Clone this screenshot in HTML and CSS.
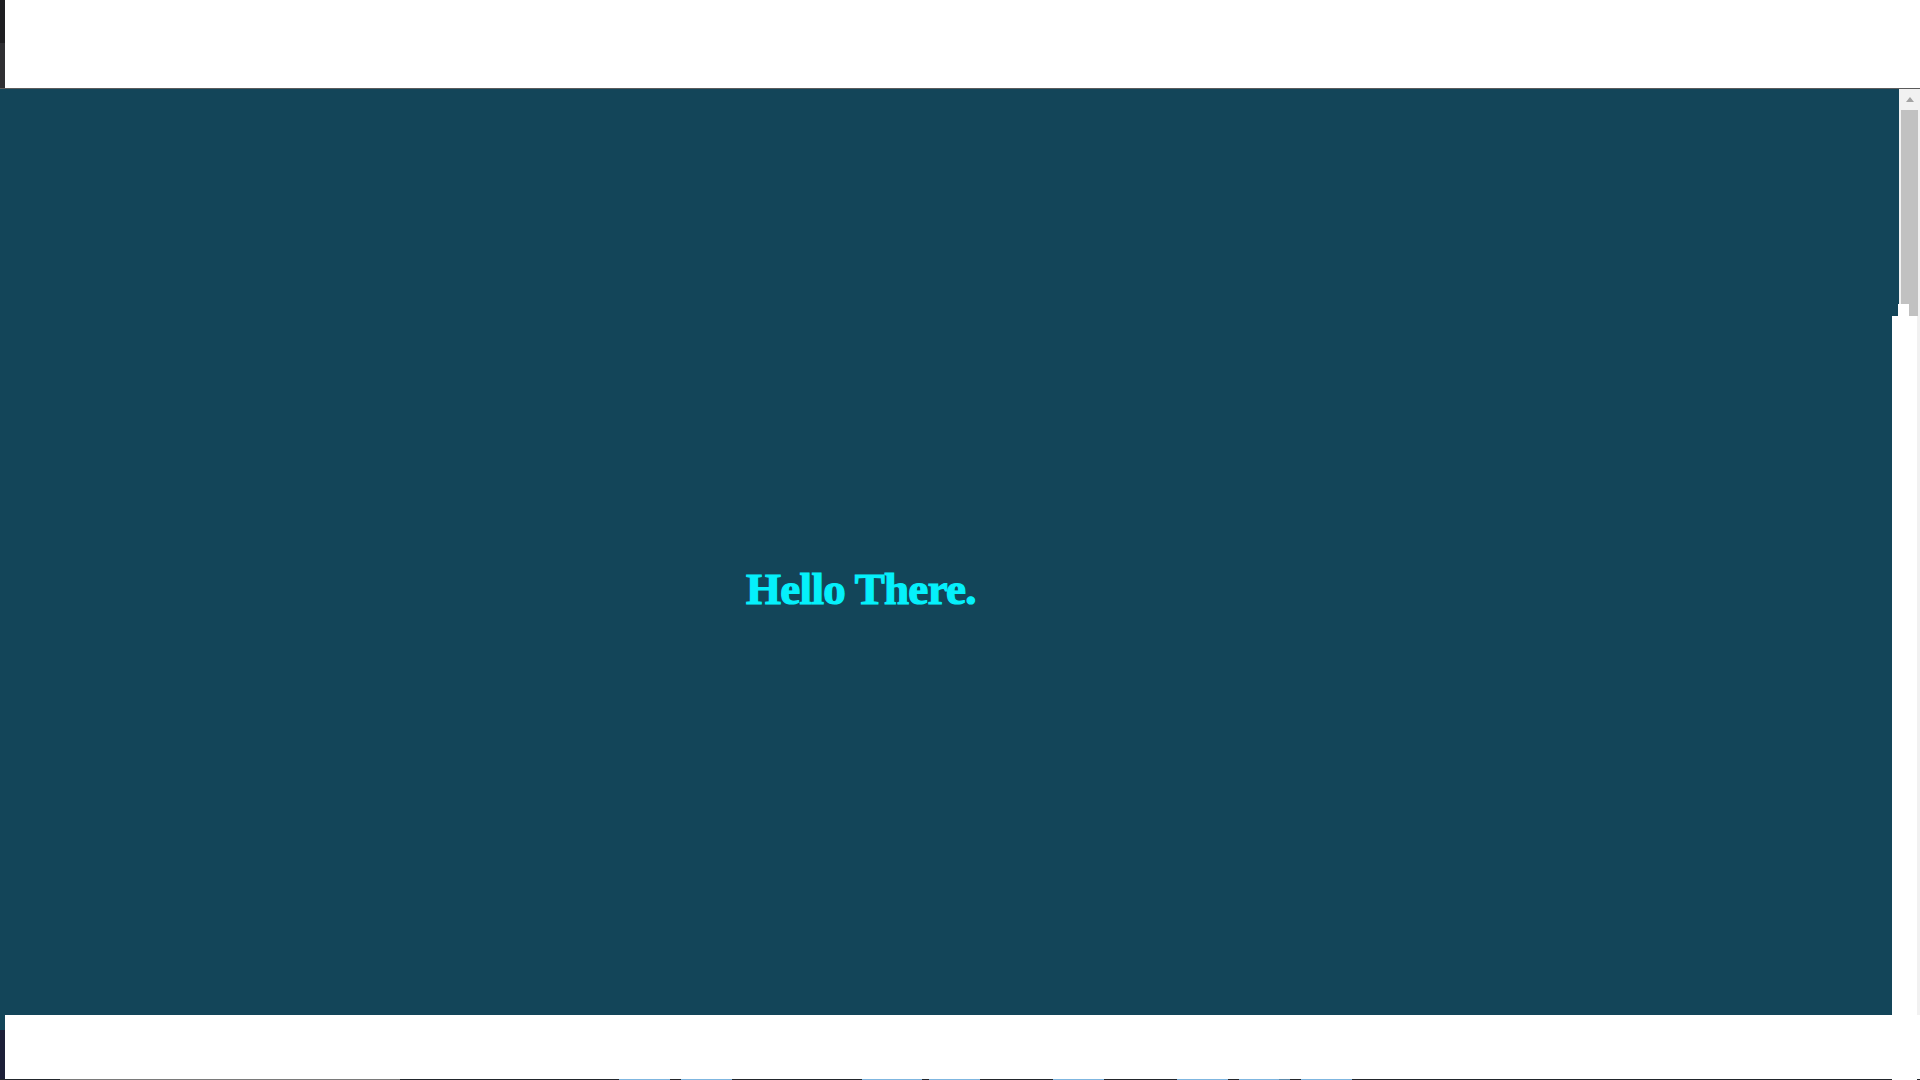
FILE: index.html
```html
<!DOCTYPE html>
<html lang="en">
<head>
<meta charset="utf-8">
<title>Hello There</title>
<link rel="stylesheet" href="styles.css">
</head>
<body>
<div class="screen">
  <div class="top">
    <div class="edge">
      <div class="edge-a"></div>
      <div class="edge-b"></div>
    </div>
    <div class="top-fill"></div>
  </div>
  <div class="rule"></div>
  <div class="main">
    <div class="stage">
      <h1 class="hello">Hello There.</h1>
    </div>
    <div class="side">
      <div class="side-top">
        <div class="teal-a"></div>
        <div class="scrollbar">
          <div class="arrow"><span class="tri"></span></div>
          <div class="thumb"></div>
        </div>
      </div>
      <div class="side-mid">
        <div class="teal-b"></div>
        <div class="notch"></div>
        <div class="thumb-end"></div>
        <div class="track-end"></div>
      </div>
      <div class="side-low">
        <div class="blank"></div>
        <div class="track-low"></div>
      </div>
    </div>
  </div>
  <div class="bottom">
    <div class="edge-bottom">
      <div class="edge-c"></div>
      <div class="edge-d"></div>
    </div>
    <div class="bottom-fill"></div>
  </div>
  <div class="taskline"></div>
</div>
</body>
</html>
```
FILE: styles.css
```css
html, body {
  margin: 0;
  padding: 0;
  background: #ffffff;
}
.screen {
  width: 1920px;
  height: 1080px;
  overflow: hidden;
  display: flex;
  flex-direction: column;
  background: #ffffff;
}
.top {
  height: 88px;
  display: flex;
}
.edge {
  width: 5px;
  display: flex;
  flex-direction: column;
}
.edge-a {
  height: 43px;
  background: #1e1e21;
}
.edge-b {
  flex: 1;
  background: #2f2f32;
}
.top-fill {
  flex: 1;
  background: #ffffff;
}
.rule {
  height: 1px;
  background: #5b5b5b;
}
.main {
  height: 926px;
  display: flex;
}
.stage {
  flex: 1;
  background: #134559;
  padding: 478px 0 0 746px;
  box-sizing: border-box;
}
.hello {
  margin: 0;
  font-family: "Liberation Serif", "DejaVu Serif", serif;
  font-weight: 700;
  font-size: 45px;
  line-height: 45px;
  letter-spacing: -0.7px;
  color: #05f0fb;
  -webkit-text-stroke: 1.2px #05f0fb;
}
.side {
  width: 28px;
  display: flex;
  flex-direction: column;
}
.side-top {
  height: 215px;
  display: flex;
}
.teal-a {
  width: 7px;
  background: #134559;
}
.scrollbar {
  flex: 1;
  background: #f1f1f1;
  display: flex;
  flex-direction: column;
}
.arrow {
  height: 21px;
  display: flex;
  justify-content: center;
  align-items: center;
}
.tri {
  width: 0;
  height: 0;
  border-left: 4.5px solid transparent;
  border-right: 4.5px solid transparent;
  border-bottom: 5px solid #a3a3a3;
  margin-left: 1px;
}
.thumb {
  flex: 1;
  margin: 0 2px 0 2px;
  background: #c1c1c1;
}
.side-mid {
  height: 12px;
  display: flex;
}
.teal-b {
  width: 6px;
  background: #134559;
}
.notch {
  width: 11px;
  background: #ffffff;
}
.thumb-end {
  width: 9px;
  background: #c1c1c1;
}
.track-end {
  flex: 1;
  background: #f1f1f1;
}
.side-low {
  flex: 1;
  display: flex;
}
.blank {
  width: 25px;
  background: #ffffff;
}
.track-low {
  flex: 1;
  background: #f1f1f1;
}
.bottom {
  height: 64px;
  display: flex;
}
.edge-bottom {
  width: 5px;
  display: flex;
  flex-direction: column;
}
.edge-c {
  height: 15px;
  background: #134559;
}
.edge-d {
  flex: 1;
  background: #1c1f38;
}
.bottom-fill {
  flex: 1;
  background: #ffffff;
}
.taskline {
  height: 1px;
  background: linear-gradient(to right,
    #22262c 0, #22262c 60px,
    #7a7a7a 60px, #7a7a7a 400px,
    #22262c 400px, #22262c 619px,
    #7fb6e0 619px, #7fb6e0 670px,
    #22262c 670px, #22262c 681px,
    #7fb6e0 681px, #7fb6e0 732px,
    #22262c 732px, #22262c 862px,
    #7fb6e0 862px, #7fb6e0 922px,
    #22262c 922px, #22262c 929px,
    #7fb6e0 929px, #7fb6e0 980px,
    #22262c 980px, #22262c 1053px,
    #7fb6e0 1053px, #7fb6e0 1104px,
    #22262c 1104px, #22262c 1177px,
    #7fb6e0 1177px, #7fb6e0 1228px,
    #22262c 1228px, #22262c 1239px,
    #7fb6e0 1239px, #7fb6e0 1279px,
    #5d8aab 1279px, #5d8aab 1290px,
    #22262c 1290px, #22262c 1301px,
    #7fb6e0 1301px, #7fb6e0 1352px,
    #22262c 1352px, #22262c 1892px,
    #ffffff 1892px, #ffffff 1917px,
    #22262c 1917px, #22262c 1920px);
}
```
